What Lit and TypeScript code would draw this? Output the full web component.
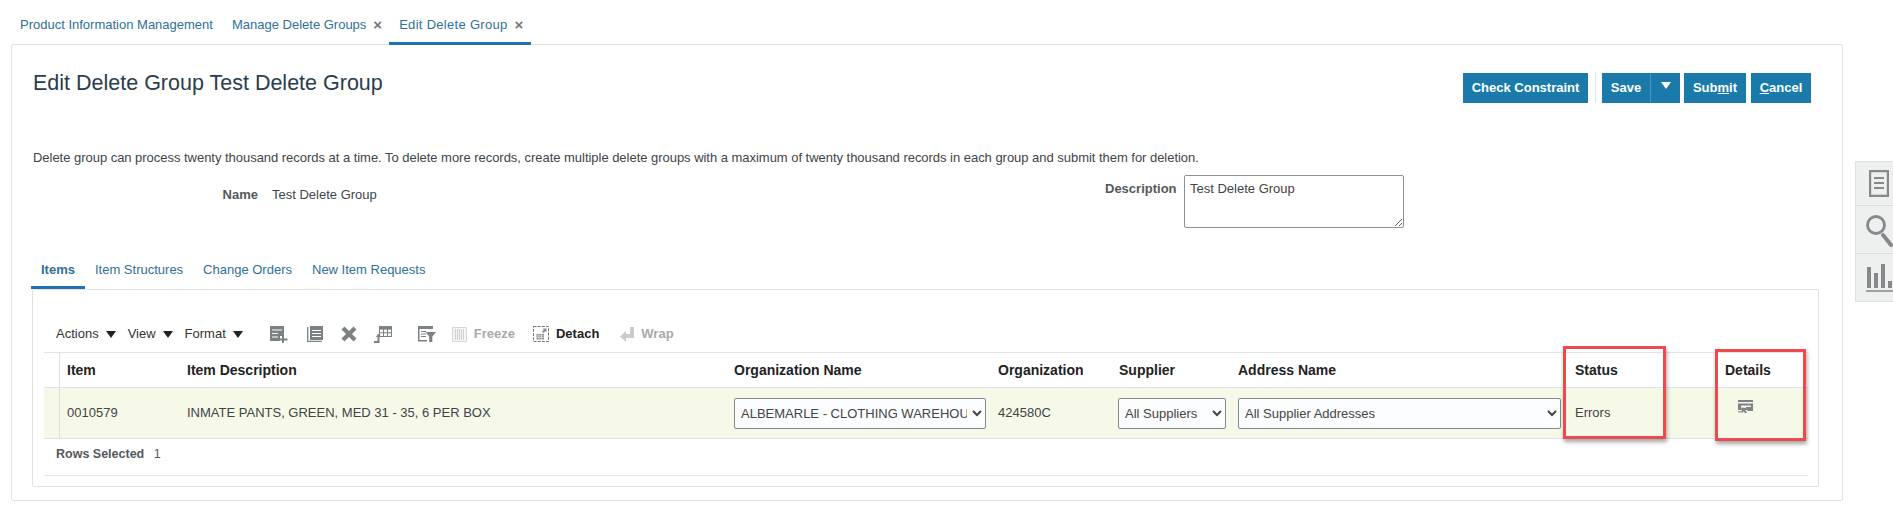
import { LitElement, html, css, svg } from "lit";
import { customElement } from "lit/decorators.js";

const G = "#7c8184";
const L = "#c9cccd";

const icons = {
  add: svg`<svg width="19" height="17" viewBox="0 0 19 17"><path fill="${G}" d="M0 0h14v10h-4v5H0z"/><path stroke="#fff" stroke-width="1.100" d="M2 4h10M2 7.500h6M2 11h6"/><path fill="${G}" d="M12 9.500h2v3h3.500v2H14V17h-2v-2.500H8.500v-2H12z"/></svg>`,
  doc: svg`<svg width="16" height="16" viewBox="0 0 16 16"><path fill="none" stroke="${G}" stroke-width="1.300" d="M.7 1v14.300h14"/><path fill="${G}" d="M3 0h13v14H3z"/><path stroke="#fff" stroke-width="1.200" d="M5 4.500h9M5 7.500h9M5 10.500h9"/></svg>`,
  del: svg`<svg width="16" height="16" viewBox="0 0 16 16"><path stroke="${G}" stroke-width="4.200" d="M2 2l12 12M14 2L2 14"/></svg>`,
  cols: svg`<svg width="18" height="17" viewBox="0 0 18 17"><path fill="none" stroke="${G}" stroke-width="1.100" d="M5.500.8h12v9.700h-12zM9.500.8v9.700M13.500.8v9.700M5.500 6.800h12"/><path fill="${G}" d="M5 .2h13v3.400H5z"/><path fill="none" stroke="${G}" stroke-width="2" d="M0 16h4.500v-5.500"/><path fill="${G}" d="M1.800 11l2.700-3.500L7.300 11z"/></svg>`,
  filter: svg`<svg width="18" height="16" viewBox="0 0 18 16"><path fill="${G}" d="M0 0h15v3H0zM0 3h1.500v11H9v1.500H0z"/><path stroke="${G}" stroke-width="1.200" d="M3 5.500h5M3 8h5M3 10.500h5"/><path fill="${G}" d="M7.500 6H18l-3.700 4.500V16h-3.100v-5.500z"/></svg>`,
  freeze: svg`<svg width="15" height="15" viewBox="0 0 15 15"><path fill="#f4f5f5" stroke="#d4d6d7" d="M.5.500h14v14H.5z"/><path stroke="#cfd2d3" d="M3.500 2v11M5.500 2v11M7.500 2v11M9.500 2v11M11.500 2v11"/></svg>`,
  detach: svg`<svg width="16" height="16" viewBox="0 0 16 16"><path fill="none" stroke="#6f7477" stroke-dasharray="3 1.200" d="M.5.500h15v15H.5z"/><path fill="#878b8e" d="M3.500 8h7.500v5.500H3.500z"/><path stroke="#fff" stroke-width=".6" d="M3.500 9.900h7.500M3.500 11.700h7.500M6 8v5.500M8.500 8v5.500"/><path fill="#878b8e" d="M9.500 2.500H13.500V6.500L12.300 5.300 10.500 7.100 9 5.800 10.800 3.800z"/></svg>`,
  wrap: svg`<svg width="14" height="15" viewBox="0 0 14 15"><path fill="${L}" d="M10 0h4v11H6v4L0 9.500 6 4v3h4z"/></svg>`,
  details: svg`<svg width="15" height="15" viewBox="0 0 15 15"><path fill="${G}" d="M0 0h15v2H0zM0 3.500h15V11H9.500v-1H0z"/><path fill="#f7f9e8" d="M3 5.500h10v1.500H7.500L9 8.500H3z"/><path fill="none" stroke="#f7f9e8" stroke-width="2.400" d="M8.500 13.500L4.500 9"/><path fill="${G}" d="M3.500 7.500l5.500.7-2 1.800L9 12.300l-1.300 1.200L5.500 11.200 4 13z"/><path fill="${G}" d="M0 11h5v1.500H0z" opacity=".7"/></svg>`,
  sideDoc: svg`<svg width="20" height="27" viewBox="0 0 20 27"><path fill="none" stroke="#85898b" stroke-width="2.200" d="M1.100 1.100h17.800v24.800H1.100z"/><path stroke="#85898b" stroke-width="2" d="M5 8h10M5 13h10M5 18h10"/></svg>`,
  sideSearch: svg`<svg width="27" height="33" viewBox="0 0 27 33"><circle cx="10" cy="11" r="8.500" fill="none" stroke="#85898b" stroke-width="2.800"/><path stroke="#85898b" stroke-width="4" stroke-linecap="round" d="M17 21l8 10"/></svg>`,
  sideBars: svg`<svg width="27" height="28" viewBox="0 0 27 28"><path fill="#85898b" d="M1 3h4v21H1zM8 9h4v15H8zM15 0h4v24h-4zM22 17h4v7h-4z"/><path stroke="#85898b" stroke-width="1.500" d="M0 27h27"/></svg>`,
};

@customElement("app-root")
export class AppRoot extends LitElement {
  static styles = css`
    :host { display: block; position: relative; width: 1893px; height: 513px; overflow: hidden; background: #fff;
      font: 13px/16px "Liberation Sans", Arial, sans-serif; color: #3f4447; }
    .tabs { display: flex; gap: 1px; height: 44px; margin-left: 10px; }
    .tab { display: flex; align-items: center; gap: 7px; height: 45px; box-sizing: border-box; padding: 4px 8px 0 10px; color: #2e7099; position: relative; z-index: 1; white-space: nowrap; }
    .tab.on { border-bottom: 3px solid #1f71b5; padding-top: 7px; letter-spacing: .3px; width: 142px; margin-left: -2px; }
    .x { color: #777; font-size: 15px; line-height: 16px; font-weight: bold; letter-spacing: 0; }
    .panel { box-sizing: border-box; height: 457px; width: 1832px; margin-left: 11px; border: 1px solid #dfe1e2; border-radius: 2px; padding: 26px 31px 0 21px; }
    .head { display: flex; justify-content: space-between; align-items: flex-start; height: 32px; }
    h1 { margin: 0; font-weight: normal; font-size: 21.500px; line-height: 24px; color: #2b3d4d; white-space: nowrap; }
    .btns { display: flex; margin-top: 2px; }
    .btn { display: flex; align-items: center; justify-content: center; height: 30px; background: #1a7bab; color: #fff; font-weight: bold; }
    .sep { width: 1px; height: 31px; background: #e3e5e6; margin: -1px 6px 0 7px; }
    .save { display: flex; margin-right: 4px; }
    .arrow { border-left: 1px solid #4d97bd; }
    .arrow i { display: block; width: 0; height: 0; border: 5px solid transparent; border-top: 7px solid #fff; border-bottom: 0; margin-top: -6px; }
    .note { margin: 47px 0 0; white-space: nowrap; letter-spacing: -.03px; }
    .form { display: grid; grid-template-columns: 225px 847px 71px 220px; margin-top: 9px; height: 53px; }
    .lbl { font-weight: bold; text-align: right; color: #55595c; }
    .name, .name + .val { padding-top: 12px; }
    .val { padding-left: 14px; }
    .dlbl { padding-top: 6px; white-space: nowrap; }
    .areawrap { margin-left: 8px; width: 220px; }
    textarea { display: block; box-sizing: border-box; width: 220px; height: 53px; margin: 0; border: 1px solid #8a9299; border-radius: 2px; padding: 5px; font: inherit; color: inherit; background: #fff; }
    .itabs { display: flex; margin: 24px 0 0 -2px; height: 37px; }
    .itab { box-sizing: border-box; height: 37px; padding: 10px 10px 0; color: #2e7099; white-space: nowrap; }
    .itab.on { border-bottom: 3px solid #1f71b5; font-weight: bold; }
    .inner { box-sizing: border-box; height: 198px; width: 1787px; margin-left: -1px; border: 1px solid #dfe1e2; border-radius: 2px; padding: 32px 10px 0 11px; position: relative; }
    .bar { display: flex; align-items: center; height: 30px; padding: 0 0 6px 12px; box-sizing: border-box; white-space: nowrap; }
    .menu { display: flex; align-items: center; color: #333; }
    .menu i { width: 0; height: 0; border: 5px solid transparent; border-top: 7px solid #222; border-bottom: 0; margin: 1px 0 0 7px; }
    .menu + .menu { margin-left: 12px; }
    .bar svg { display: block; flex: none; }
    .ic1 { margin-left: 27px; } .ic { margin-left: 18px; } .ic4 { margin-left: 17px; } .ic5 { margin-left: 26px; }
    .ic6 { margin-left: 16px; } .ic7 { margin-left: 18px; } .ic8 { margin-left: 21px; }
    .t { margin-left: 7px; font-weight: bold; }
    .dis { color: #a7abad; } .blk { color: #222; }
    .grid { display: grid; grid-template-columns: 16px 120px 547px 264px 121px 119px 337px 150px 90px; border-top: 1px solid #e2e4e5; border-bottom: 1px solid #dfe1e2; }
    .grid > div { box-sizing: border-box; padding-left: 7px; display: flex; align-items: center; white-space: nowrap; }
    .grid > .h { height: 35px; font-weight: bold; font-size: 14px; color: #222; border-bottom: 1px solid #dfe1e2; }
    .c { height: 50px; background: #f7f9e8; }
    .grid > .s { padding: 0; border-right: 1px solid #dcdedf; }
    .grid > .ico { padding: 0 0 12px 20px; }
    select { box-sizing: border-box; height: 31px; margin: 0; border: 1px solid #7f8a90; border-radius: 2px; background: #fbfdfe; font: inherit; color: #444; padding: 0 2px; }
    .o { width: 252px; } .su { width: 108px; margin-left: -1px; } .ad { width: 323px; }
    .foot { padding: 7px 0 0 12px; font-size: 12.500px; font-weight: bold; color: #55595c; height: 37px; box-sizing: border-box; border-bottom: 1px solid #e2e4e5; }
    .foot span { margin-left: 6px; font-weight: normal; }
    .side { position: absolute; left: 1855px; top: 161px; width: 38px; height: 141px; box-sizing: border-box; background: #eeefef; border: 1px solid #dfe1e2; border-right: 0; display: grid; grid-template-rows: 44px 48px 1fr; }
    .side div { display: flex; border-bottom: 1px solid #d9dbdc; align-items: center; padding-left: 13px; }
    .side div:nth-child(2) { padding-left: 10px; align-items: flex-start; padding-top: 8px; }
    .side div:nth-child(3) { border: 0; padding-left: 10px; }
    .mark { position: absolute; box-sizing: border-box; border: 3px solid #ec4a4f; box-shadow: 1px 3px 4px rgba(0,0,0,.35); }
    .m1 { left: 1563px; top: 346px; width: 103px; height: 93px; }
    .m2 { left: 1715px; top: 349px; width: 91px; height: 92px; }
  `;

  render() {
    const cols = ["Item", "Item Description", "Organization Name", "Organization", "Supplier", "Address Name", "Status", "Details"];
    return html`
      <div class="tabs">
        <div class="tab">Product Information Management</div>
        <div class="tab">Manage Delete Groups <span class="x">×</span></div>
        <div class="tab on">Edit Delete Group <span class="x">×</span></div>
      </div>
      <div class="panel">
        <div class="head">
          <h1>Edit Delete Group Test Delete Group</h1>
          <div class="btns">
            <div class="btn" style="width:125px">Check Constraint</div>
            <div class="sep"></div>
            <div class="save">
              <div class="btn" style="width:48px">Save</div>
              <div class="btn arrow" style="width:29px"><i></i></div>
            </div>
            <div class="btn" style="width:62px">Sub<u>m</u>it</div>
            <div class="btn" style="width:60px;margin-left:5px"><u>C</u>ancel</div>
          </div>
        </div>
        <p class="note">Delete group can process twenty thousand records at a time. To delete more records, create multiple delete groups with a maximum of twenty thousand records in each group and submit them for deletion.</p>
        <div class="form">
          <div class="lbl name">Name</div>
          <div class="val">Test Delete Group</div>
          <div class="lbl dlbl">Description</div>
          <div class="areawrap"><textarea>Test Delete Group</textarea></div>
        </div>
        <div class="itabs">
          <div class="itab on">Items</div>
          <div class="itab">Item Structures</div>
          <div class="itab">Change Orders</div>
          <div class="itab">New Item Requests</div>
        </div>
        <div class="inner">
          <div class="bar">
            <div class="menu">Actions<i></i></div>
            <div class="menu">View<i></i></div>
            <div class="menu">Format<i></i></div>
            <span class="ic1">${icons.add}</span>
            <span class="ic">${icons.doc}</span>
            <span class="ic">${icons.del}</span>
            <span class="ic4">${icons.cols}</span>
            <span class="ic5">${icons.filter}</span>
            <span class="ic6">${icons.freeze}</span>
            <span class="t dis">Freeze</span>
            <span class="ic7">${icons.detach}</span>
            <span class="t blk">Detach</span>
            <span class="ic8">${icons.wrap}</span>
            <span class="t dis">Wrap</span>
          </div>
          <div class="grid">
            <div class="h s"></div>
            ${cols.map((c) => html`<div class="h">${c}</div>`)}
            <div class="c s"></div>
            <div class="c">0010579</div>
            <div class="c">INMATE PANTS, GREEN, MED 31 - 35, 6 PER BOX</div>
            <div class="c"><select class="o"><option>ALBEMARLE - CLOTHING WAREHOUSE</option></select></div>
            <div class="c">424580C</div>
            <div class="c"><select class="su"><option>All Suppliers</option></select></div>
            <div class="c"><select class="ad"><option>All Supplier Addresses</option></select></div>
            <div class="c">Errors</div>
            <div class="c ico">${icons.details}</div>
          </div>
          <div class="foot">Rows Selected <span>1</span></div>
        </div>
      </div>
      <div class="side">
        <div>${icons.sideDoc}</div>
        <div>${icons.sideSearch}</div>
        <div>${icons.sideBars}</div>
      </div>
      <div class="mark m1"></div>
      <div class="mark m2"></div>
    `;
  }
}
